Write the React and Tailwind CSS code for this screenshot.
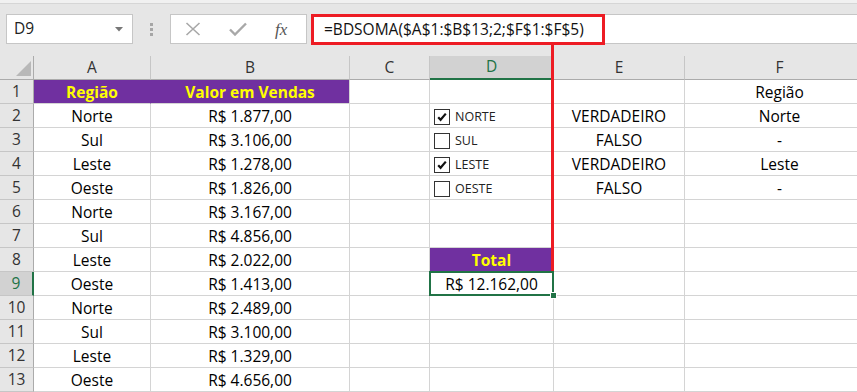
import React from "react";

const FONT = { fontFamily: '"Open Sans", "Noto Sans", sans-serif' };

const data = [
  ["Norte", "R$ 1.877,00"],
  ["Sul", "R$ 3.106,00"],
  ["Leste", "R$ 1.278,00"],
  ["Oeste", "R$ 1.826,00"],
  ["Norte", "R$ 3.167,00"],
  ["Sul", "R$ 4.856,00"],
  ["Leste", "R$ 2.022,00"],
  ["Oeste", "R$ 1.413,00"],
  ["Norte", "R$ 2.489,00"],
  ["Sul", "R$ 3.100,00"],
  ["Leste", "R$ 1.329,00"],
  ["Oeste", "R$ 4.656,00"],
];

const checks = [
  { label: "NORTE", checked: true, e: "VERDADEIRO", f: "Norte" },
  { label: "SUL", checked: false, e: "FALSO", f: "-" },
  { label: "LESTE", checked: true, e: "VERDADEIRO", f: "Leste" },
  { label: "OESTE", checked: false, e: "FALSO", f: "-" },
];

function Cell({ children, className = "", head = false }) {
  return (
    <div
      className={
        "h-[24px] border-r border-b border-[#d4d4d4] flex items-center justify-center text-[15.5px] whitespace-nowrap overflow-hidden pt-[2px] " +
        (head ? "bg-[#7030a0] font-bold text-[#ffff00] " : "text-black ") +
        className
      }
    >
      {children}
    </div>
  );
}

function RowHead({ n, selected }) {
  return (
    <div
      className={
        "h-[24px] border-b border-[#c6c6c6] flex items-center justify-center text-[15.5px] pt-[1px] " +
        (selected
          ? "bg-[#d2d2d2] text-[#217346] border-r-2 border-r-[#217346]"
          : "bg-[#e6e6e6] text-[#333] border-r border-r-[#ababab]")
      }
    >
      {n}
    </div>
  );
}

function ColHead({ l, selected }) {
  return (
    <div
      className={
        "h-[24px] border-r border-[#c6c6c6] flex items-center justify-center text-[15.5px] " +
        (selected
          ? "bg-[#d2d2d2] text-[#217346] border-b-2 border-b-[#217346]"
          : "bg-[#e6e6e6] text-[#333] border-b border-b-[#ababab]")
      }
    >
      {l}
    </div>
  );
}

function CheckItem({ label, checked }) {
  return (
    <div className="flex items-center gap-[5px] pl-[4px] h-full w-full">
      <div className="w-[16px] h-[16px] border border-[#333] bg-white flex items-center justify-center shrink-0">
        {checked && (
          <svg width="12" height="12" viewBox="0 0 12 12">
            <path d="M2.2 6.2 L4.6 8.8 L9.8 2.6" stroke="#111" strokeWidth="2.2" fill="none" strokeLinejoin="miter" />
          </svg>
        )}
      </div>
      <span className="text-[12.5px] text-[#222] leading-none pt-[1px]">{label}</span>
    </div>
  );
}

export default function App() {
  return (
    <div className="relative w-[857px] h-[392px] overflow-hidden bg-white" style={FONT}>
      {/* Formula bar area */}
      <div className="h-[56px] bg-[#e6e6e6]">
        <div className="h-[4px] bg-[#f1f1f1] border-b border-[#d6d6d6]" />
        <div className="flex items-start pt-[10px]">
          <div className="ml-[6px] w-[127px] h-[30px] bg-white border border-[#c6c6c6] flex items-center justify-between pl-[7px] pr-[9px]">
            <span className="text-[15.5px] text-[#222]">D9</span>
            <svg width="8" height="5" viewBox="0 0 8 5">
              <path d="M0 0 H8 L4 4.5 Z" fill="#777" />
            </svg>
          </div>
          <div className="w-[37px] h-[30px] flex flex-col items-center justify-center gap-[2px]">
            <div className="w-[3px] h-[3px] bg-[#a6a6a6]" />
            <div className="w-[3px] h-[3px] bg-[#a6a6a6]" />
            <div className="w-[3px] h-[3px] bg-[#a6a6a6]" />
          </div>
          <div className="w-[137px] h-[30px] bg-white border border-[#c6c6c6] flex items-center">
            <svg className="ml-[14px]" width="16" height="14" viewBox="0 0 16 14">
              <path d="M1.5 1 L14.5 13 M14.5 1 L1.5 13" stroke="#a8a8a8" strokeWidth="1.6" />
            </svg>
            <svg className="ml-[28px]" width="18" height="14" viewBox="0 0 18 14">
              <path d="M1 7.5 L6 12.5 L17 1.5" stroke="#a8a8a8" strokeWidth="2.4" fill="none" />
            </svg>
            <span
              className="ml-[28px] text-[17px] italic text-[#555] leading-none"
              style={{ fontFamily: '"Liberation Serif", serif' }}
            >
              fx
            </span>
          </div>
          <div className="ml-[4px] flex-1 h-[30px] bg-white border-y border-[#c6c6c6]">
            <div className="-mt-[1px] w-[294px] h-[31px] border-[3px] border-[#ed1c24] flex items-center pl-[10px]">
              <span className="text-[15.5px] text-[#111] whitespace-nowrap">=BDSOMA($A$1:$B$13;2;$F$1:$F$5)</span>
            </div>
          </div>
        </div>
      </div>

      {/* Grid */}
      <div className="grid grid-cols-[34px_117px_199px_80px_124px_131px_190px] w-[875px]">
        {/* Header row */}
        <div className="h-[24px] bg-[#e6e6e6] border-r border-b border-[#ababab] flex items-end justify-end pr-[2px] pb-[3px]">
          <svg width="15" height="15" viewBox="0 0 15 15">
            <path d="M15 0 V15 H0 Z" fill="#b8b8b8" />
          </svg>
        </div>
        <ColHead l="A" />
        <ColHead l="B" />
        <ColHead l="C" />
        <ColHead l="D" selected />
        <ColHead l="E" />
        <ColHead l="F" />

        {/* Row 1 */}
        <RowHead n={1} />
        <Cell head className="border-r-[#7030a0]">Região</Cell>
        <Cell head>Valor em Vendas</Cell>
        <Cell />
        <Cell />
        <Cell />
        <Cell>Região</Cell>

        {data.map((r, i) => {
          const rowNum = i + 2;
          const chk = checks[i];
          let dCell;
          let eCell = null;
          let fCell = null;
          if (chk) {
            dCell = (
              <Cell className="justify-start pt-0">
                <CheckItem label={chk.label} checked={chk.checked} />
              </Cell>
            );
            eCell = chk.e;
            fCell = chk.f;
          } else if (rowNum === 8) {
            dCell = <Cell head>Total</Cell>;
          } else if (rowNum === 9) {
            dCell = (
              <Cell className="relative overflow-visible">
                <div className="absolute -left-[1px] -top-[1px] -right-[1px] -bottom-[1px] border-2 border-[#217346]" />
                <div className="absolute -right-[4px] -bottom-[4px] w-[7px] h-[7px] bg-[#217346] border border-white" />
                R$ 12.162,00
              </Cell>
            );
          } else {
            dCell = <Cell />;
          }
          return (
            <React.Fragment key={rowNum}>
              <RowHead n={rowNum} selected={rowNum === 9} />
              <Cell>{r[0]}</Cell>
              <Cell>{r[1]}</Cell>
              <Cell />
              {dCell}
              <Cell>{eCell}</Cell>
              <Cell>{fCell}</Cell>
            </React.Fragment>
          );
        })}
      </div>

      {/* Red connector line */}
      <div className="absolute left-[551px] top-[45px] w-[3px] h-[226px] bg-[#ed1c24] z-10" />
    </div>
  );
}
